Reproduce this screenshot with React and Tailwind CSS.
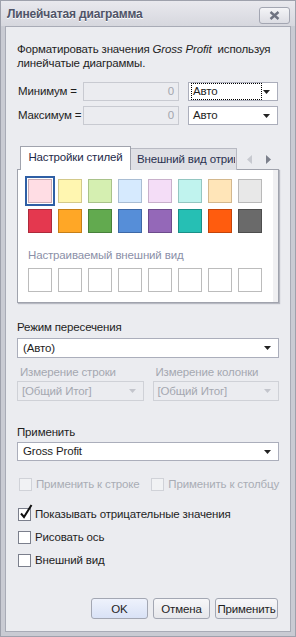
import React from "react";

const pale = [
  ["bg-[#ffdde4]", "border-[#c9a9b1]"],
  ["bg-[#fff6b0]", "border-[#d3c98a]"],
  ["bg-[#d5efb1]", "border-[#a9c28a]"],
  ["bg-[#d6eafe]", "border-[#a9bdd3]"],
  ["bg-[#f4ddf7]", "border-[#c8b0cb]"],
  ["bg-[#c0f3ee]", "border-[#94c6c1]"],
  ["bg-[#ffe5b8]", "border-[#d3b88e]"],
  ["bg-[#e8e8e8]", "border-[#b9b9b9]"],
];

const bright = [
  ["bg-[#e4384f]", "border-[#ad2a3b]"],
  ["bg-[#ffa726]", "border-[#c57f18]"],
  ["bg-[#62aa4f]", "border-[#47803a]"],
  ["bg-[#568ed8]", "border-[#3d68a6]"],
  ["bg-[#9468b8]", "border-[#6d4b8c]"],
  ["bg-[#26bfb4]", "border-[#1a8f87]"],
  ["bg-[#ff5c0e]", "border-[#c3440a]"],
  ["bg-[#6a6a6a]", "border-[#4d4d4d]"],
];

const Arrow = ({ disabled }) => (
  <svg width="7" height="4" viewBox="0 0 7 4" className="shrink-0">
    <path d="M0 0h7L3.5 4z" fill={disabled ? "#c3c5cc" : "#222"} />
  </svg>
);

const Select = ({ value, className = "", focused, disabled }) => (
  <div
    className={`flex items-center justify-between border pl-[2px] pr-[7px] whitespace-nowrap ${
      disabled ? "border-[#cfd1d7] bg-[#ebecf0] text-[#a5a8b0]" : "border-[#abaebb] bg-white text-[#1e1e1e]"
    } ${className}`}
  >
    <span
      className={`leading-[15px] px-[1px] ${
        focused ? "border border-dotted border-black w-[71px]" : "border border-transparent"
      }`}
    >
      {value}
    </span>
    <Arrow disabled={disabled} />
  </div>
);

const Check = ({ label, checked, disabled }) => (
  <div className="flex items-center gap-[4px] whitespace-nowrap">
    <div
      className={`relative w-[13px] h-[13px] border ${
        disabled ? "border-[#d0d2d8] bg-[#f1f2f4]" : "border-[#7b7f8c] bg-white"
      }`}
    >
      {checked && (
        <svg width="15" height="16" viewBox="0 0 15 16" className="absolute left-[0px] top-[-5px]">
          <path d="M2 9.5l3 3.5L12.5 1" fill="none" stroke="#111" strokeWidth="2" />
        </svg>
      )}
    </div>
    <span className={`leading-[14px] ${disabled ? "text-[#a9acb5]" : "text-[#1e1e1e]"}`}>
      {label}
    </span>
  </div>
);

const Btn = ({ children, className = "" }) => (
  <button
    className={`h-[21px] border border-[#a3a7b3] rounded-[3px] text-[#1e1e1e] leading-[14px] ${className}`}
  >
    {children}
  </button>
);

export default function App() {
  return (
    <div
      className="w-[296px] h-[637px] bg-[#c9cbd3] border border-[#9ea1ac] flex flex-col text-[11.5px] tracking-[-0.15px]"
      style={{ fontFamily: '"Liberation Sans", Arial, sans-serif' }}
    >
      {/* title bar */}
      <div className="h-[25px] flex items-center justify-between pl-[6px] pr-[5px] bg-gradient-to-b from-[#e9e9ee] to-[#d6d7de]">
        <span className="font-bold text-[12px] text-[#4f5468] [text-shadow:0_1px_0_#fff]">
          Линейчатая диаграмма
        </span>
        <div className="w-[31px] h-[17px] mt-[3px] border border-[#a3a6b2] rounded-[3px] bg-gradient-to-b from-[#f4f4f7] to-[#dcdde3] flex items-center justify-center">
          <svg width="11" height="9" viewBox="0 0 11 9">
            <path d="M1.5 1l8 7M9.5 1l-8 7" stroke="#6f7381" strokeWidth="2.4" />
          </svg>
        </div>
      </div>

      {/* content */}
      <div className="flex-1 mx-[4px] mb-[4px] bg-[#ebecf0] border border-[#a8abb6] px-[11px] flex flex-col text-[#1e1e1e]">
        <p className="mt-[15px] leading-[14px] whitespace-nowrap">
          Форматировать значения <i>Gross Profit</i>&nbsp; используя
          <br />
          линейчатые диаграммы.
        </p>

        <div className="mt-[12px] flex items-center h-[19px] whitespace-nowrap">
          <span className="w-[66px] pl-[1px]">Минимум =</span>
          <div className="w-[96px] h-[19px] border border-[#c8cad1] text-[#a3a6ae] text-right pr-[4px] leading-[17px]">
            0
          </div>
          <Select value="Авто" focused className="ml-[9px] w-[90px] h-[19px]" />
        </div>
        <div className="mt-[5px] flex items-center h-[19px] whitespace-nowrap">
          <span className="w-[66px] pl-[1px]">Максимум =</span>
          <div className="w-[96px] h-[19px] border border-[#c8cad1] text-[#a3a6ae] text-right pr-[4px] leading-[17px]">
            0
          </div>
          <Select value="Авто" className="ml-[9px] w-[90px] h-[19px]" />
        </div>

        {/* tabs */}
        <div className="mt-[21px] flex items-end h-[24px] pl-[3px] relative z-10">
          <div className="w-[111px] h-[24px] bg-white border border-b-0 border-[#a0a3ad] flex items-center justify-center text-[#1e2a4a] pb-[1px] whitespace-nowrap">
            Настройки стилей
          </div>
          <div className="w-[106px] h-[22px] bg-[#dfe0e5] border border-l-0 border-b-0 border-[#b8bac3] pl-[6px] flex items-center overflow-hidden whitespace-nowrap text-[#2a3150]">
            <span className="w-[98px] overflow-hidden">Внешний вид отрицательных</span>
          </div>
          <div className="flex items-center gap-[14px] ml-[10px] mb-[6px]">
            <svg width="5" height="9" viewBox="0 0 5 9">
              <path d="M5 0v9L0 4.5z" fill="#c7c9d0" />
            </svg>
            <svg width="5" height="9" viewBox="0 0 5 9">
              <path d="M0 0v9l5-4.5z" fill="#7c808c" />
            </svg>
          </div>
        </div>
        <div className="-mt-[1px] h-[134px] bg-white border border-[#a0a3ad] shadow-[1px_1px_1px_#b7b9c2] flex">
          <div className="flex-1 pl-[10px] pt-[9px]">
            <div className="flex gap-[6px]">
              {pale.map(([bg, br], i) => (
                <div
                  key={i}
                  className={`w-[24px] h-[24px] border ${bg} ${br} ${
                    i === 0 ? "outline-2 outline-[#2f5fa5] outline-offset-1" : ""
                  }`}
                />
              ))}
            </div>
            <div className="flex gap-[6px] mt-[6px]">
              {bright.map(([bg, br], i) => (
                <div key={i} className={`w-[24px] h-[24px] border ${bg} ${br}`} />
              ))}
            </div>
            <div className="mt-[15px] text-[#8b90a8] leading-[14px]">Настраиваемый внешний вид</div>
            <div className="flex gap-[6px] mt-[6px]">
              {Array.from({ length: 8 }).map((_, i) => (
                <div key={i} className="w-[24px] h-[24px] border border-[#bcbcbc] bg-white" />
              ))}
            </div>
          </div>
          <div className="w-[5px] bg-[#f0f0f2]" />
        </div>

        <div className="mt-[17px] leading-[14px]">Режим пересечения</div>
        <Select value="(Авто)" className="mt-[4px] h-[20px] pl-[3px]" />

        <div className="mt-[7px] grid grid-cols-2 gap-x-[9px] text-[#a5a8b0]">
          <div>
            <div className="leading-[14px] pl-[3px]">Измерение строки</div>
            <Select value="[Общий Итог]" disabled className="mt-[2px] h-[20px]" />
          </div>
          <div>
            <div className="leading-[14px] pl-[3px]">Измерение колонки</div>
            <Select value="[Общий Итог]" disabled className="mt-[2px] h-[20px]" />
          </div>
        </div>

        <div className="mt-[24px] leading-[14px]">Применить</div>
        <Select value="Gross Profit" className="mt-[3px] h-[19px] pl-[3px]" />

        <div className="mt-[16px] flex pl-[2px]">
          <div className="w-[134px]">
            <Check label="Применить к строке" disabled />
          </div>
          <Check label="Применить к столбцу" disabled />
        </div>
        <div className="mt-[16px] pl-[1px]">
          <Check label="Показывать отрицательные значения" checked />
        </div>
        <div className="mt-[9px] pl-[1px]">
          <Check label="Рисовать ось" />
        </div>
        <div className="mt-[9px] pl-[1px]">
          <Check label="Внешний вид" />
        </div>

        <div className="mt-auto mb-[12px] flex justify-end gap-[5px] pr-[1px]">
          <Btn className="w-[57px] bg-gradient-to-b from-[#eef2fc] to-[#d9e2f6]">OK</Btn>
          <Btn className="w-[57px] bg-gradient-to-b from-[#f7f7f9] to-[#e6e7eb]">Отмена</Btn>
          <Btn className="w-[63px] bg-gradient-to-b from-[#f7f7f9] to-[#e6e7eb]">Применить</Btn>
        </div>
      </div>
    </div>
  );
}
